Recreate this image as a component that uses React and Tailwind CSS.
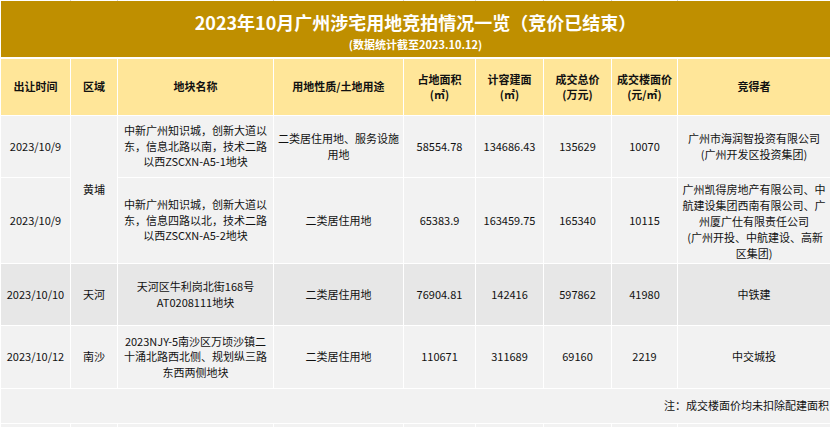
const COLS = "grid-cols-[69px_46px_155px_129px_71px_67px_67px_65px_152px]"

const HEAD = [
  ["出让时间"],
  ["区域"],
  ["地块名称"],
  ["用地性质/土地用途"],
  ["占地面积", "(㎡)"],
  ["计容建面", "(㎡)"],
  ["成交总价", "(万元)"],
  ["成交楼面价", "(元/㎡)"],
  ["竞得者"],
]

const ROWS = [
  {
    h: "h-[61px]",
    bg: "bg-[#f2f2f2]",
    date: "2023/10/9",
    name: ["中新广州知识城，创新大道以", "东，信息北路以南，技术二路", "以西ZSCXN-A5-1地块"],
    use: ["二类居住用地、服务设施", "用地"],
    nums: ["58554.78", "134686.43", "135629", "10070"],
    buyer: ["广州市海润智投资有限公司", "(广州开发区投资集团)"],
  },
  {
    h: "h-[85px]",
    bg: "bg-[#f2f2f2]",
    date: "2023/10/9",
    name: ["中新广州知识城，创新大道以", "东，信息四路以北，技术二路", "以西ZSCXN-A5-2地块"],
    use: ["二类居住用地"],
    nums: ["65383.9", "163459.75", "165340", "10115"],
    buyer: ["广州凯得房地产有限公司、中", "航建设集团西南有限公司、广", "州厦广仕有限责任公司", " (广州开投、中航建设、高新", "区集团)"],
  },
  {
    h: "h-[61px]",
    bg: "bg-[#e7e7e7]",
    date: "2023/10/10",
    area: "天河",
    name: ["天河区牛利岗北街168号", "AT0208111地块"],
    use: ["二类居住用地"],
    nums: ["76904.81", "142416", "597862", "41980"],
    buyer: ["中铁建"],
  },
  {
    h: "h-[62px]",
    bg: "bg-[#f2f2f2]",
    date: "2023/10/12",
    area: "南沙",
    name: ["2023NJY-5南沙区万顷沙镇二", "十涌北路西北侧、规划纵三路", "东西两侧地块"],
    use: ["二类居住用地"],
    nums: ["110671", "311689", "69160", "2219"],
    buyer: ["中交城投"],
  },
]

function Lines({ lines }) {
  return (
    <div>
      {lines.map((l, i) => (
        <div key={i} className="whitespace-pre">{l}</div>
      ))}
    </div>
  )
}

function Cell({ bg, children, className = "" }) {
  return (
    <div className={`${bg} flex items-center justify-center text-center ${className}`}>
      {children}
    </div>
  )
}

export default function App() {
  return (
    <div className="w-[831px] h-[427px] overflow-hidden bg-white font-['Noto_Sans_CJK_SC',sans-serif] text-[11px] leading-[15.5px] text-[#111]">
      <div className={`grid ${COLS} gap-x-px bg-[#d4d4d4] h-px ml-px w-[829px]`}>
        {HEAD.map((_, i) => <div key={i} className="bg-white" />)}
      </div>

      <div className="ml-px w-[829px] h-[56px] bg-[#bf8f00] text-white flex flex-col items-center pt-[8px]">
        <div className="text-[18px] leading-[26px] font-bold">2023年10月广州涉宅用地竞拍情况一览（竞价已结束）</div>
        <div className="text-[11px] leading-[14px] font-bold mt-[2px]">(数据统计截至2023.10.12)</div>
      </div>

      <div className={`grid ${COLS} gap-px ml-px mt-[2px] w-[829px]`}>
        {HEAD.map((lines, i) => (
          <Cell key={i} bg="bg-[#ffe699]" className="h-[56px] font-bold">
            <Lines lines={lines} />
          </Cell>
        ))}

        {ROWS.map((r, ri) => (
          <Row key={ri} r={r} ri={ri} />
        ))}

        <div className="col-span-9 h-[34px] bg-[#f2f2f2] flex items-center justify-end pr-px">
          注：成交楼面价均未扣除配建面积
        </div>

        {HEAD.map((_, i) => <div key={i} className="h-[10px] bg-[#f2f2f2]" />)}
      </div>
    </div>
  )
}

function Row({ r, ri }) {
  return (
    <>
      <Cell bg={r.bg} className={r.h}>{r.date}</Cell>
      {ri === 0 && (
        <Cell bg="bg-[#f2f2f2]" className="row-span-2">黄埔</Cell>
      )}
      {ri > 1 && <Cell bg={r.bg} className={r.h}>{r.area}</Cell>}
      <Cell bg={r.bg} className={r.h}><Lines lines={r.name} /></Cell>
      <Cell bg={r.bg} className={r.h}><Lines lines={r.use} /></Cell>
      {r.nums.map((n, i) => (
        <Cell key={i} bg={r.bg} className={r.h}>{n}</Cell>
      ))}
      <Cell bg={r.bg} className={`${r.h} ${r.buyer.length > 3 ? "leading-[16px]" : ""}`}>
        <Lines lines={r.buyer} />
      </Cell>
    </>
  )
}
